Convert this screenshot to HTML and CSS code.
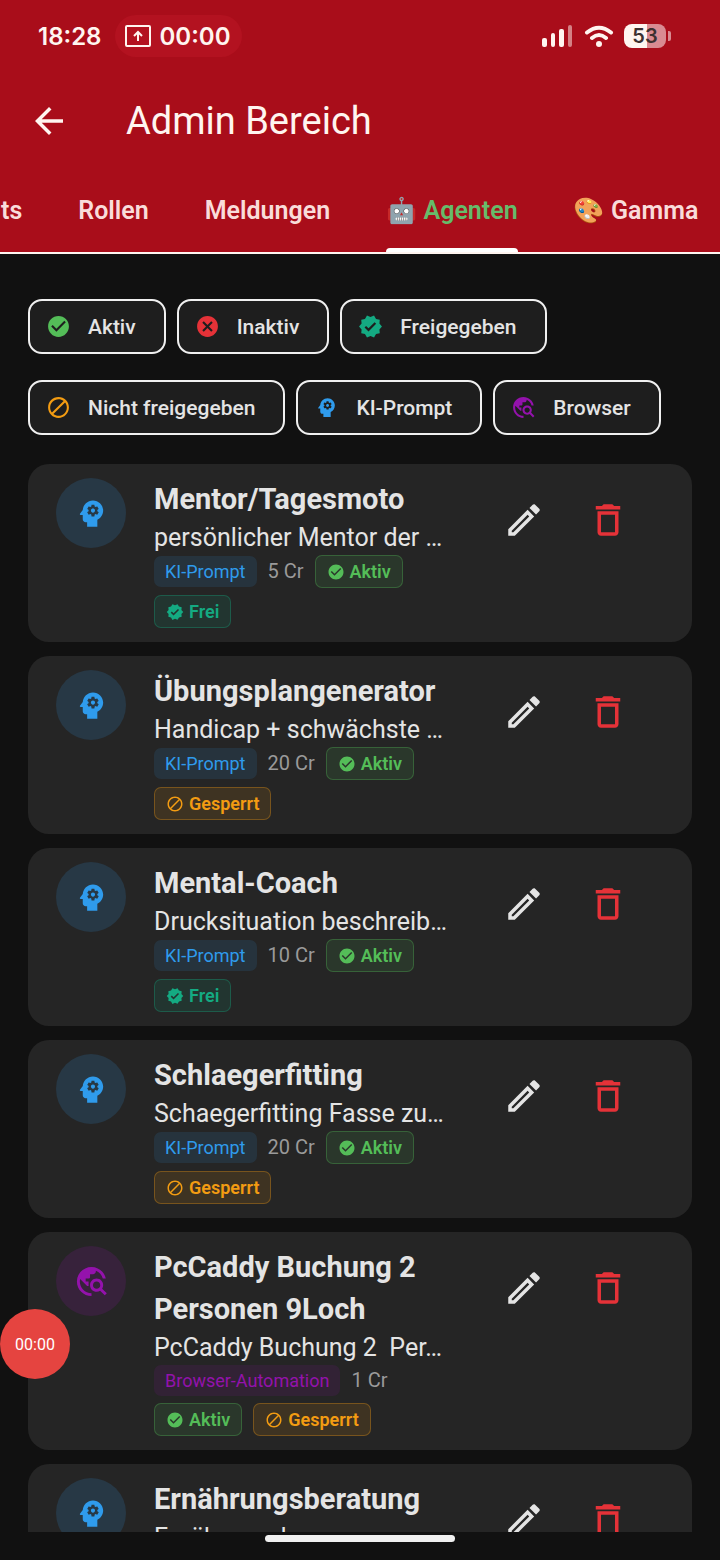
FILE: index.html
```html
<!DOCTYPE html>
<html lang="de">
<head>
<meta charset="utf-8">
<meta name="viewport" content="width=device-width, initial-scale=1">
<title>Admin Bereich</title>
<link rel="stylesheet" href="styles.css">
</head>
<body>
<svg class="sprite" aria-hidden="true">
  <symbol id="check" viewBox="0 0 24 24"><path d="M12 2C6.48 2 2 6.48 2 12s4.48 10 10 10 10-4.48 10-10S17.52 2 12 2zm-2 15l-5-5 1.41-1.41L10 14.17l7.59-7.59L19 8l-9 9z"/></symbol>
  <symbol id="cancel" viewBox="0 0 24 24"><path d="M12 2C6.47 2 2 6.47 2 12s4.47 10 10 10 10-4.47 10-10S17.53 2 12 2zm5 13.59L15.59 17 12 13.41 8.41 17 7 15.59 10.59 12 7 8.41 8.41 7 12 10.59 15.59 7 17 8.41 13.41 12 17 15.59z"/></symbol>
  <symbol id="verified" viewBox="0 0 24 24"><path d="M23 12l-2.44-2.79.34-3.69-3.61-.82-1.89-3.2L12 2.96 8.6 1.5 6.71 4.69 3.1 5.5l.34 3.7L1 12l2.44 2.79-.34 3.7 3.61.82L8.6 22.5l3.4-1.47 3.4 1.46 1.89-3.19 3.61-.82-.34-3.69L23 12zm-12.91 4.72l-3.8-3.81 1.48-1.48 2.32 2.33 5.85-5.87 1.48 1.48-7.33 7.35z"/></symbol>
  <symbol id="block" viewBox="0 0 24 24"><path d="M12 2C6.48 2 2 6.48 2 12s4.48 10 10 10 10-4.48 10-10S17.52 2 12 2zM4 12c0-4.42 3.58-8 8-8 1.85 0 3.55.63 4.9 1.69L5.69 16.9C4.63 15.55 4 13.85 4 12zm8 8c-1.85 0-3.55-.63-4.9-1.69L18.31 7.1C19.37 8.45 20 10.15 20 12c0 4.42-3.58 8-8 8z"/></symbol>
  <symbol id="mind" viewBox="0 0 24 24"><path d="M13 8.57c-.79 0-1.43.64-1.43 1.43s.64 1.43 1.43 1.43 1.43-.64 1.43-1.43-.64-1.43-1.43-1.43z"/><path d="M13 3C9.25 3 6.2 5.94 6.02 9.64L4.1 12.2c-.25.33-.01.8.4.8H6v3c0 1.1.9 2 2 2h1v3h7v-4.68c2.36-1.12 4-3.53 4-6.32 0-3.87-3.13-7-7-7zm3 7c0 .13-.01.26-.02.39l.83.66c.08.06.1.16.05.25l-.8 1.39c-.05.09-.16.12-.24.09l-.99-.4c-.21.16-.43.29-.67.39L14 13.83c-.01.1-.1.17-.2.17h-1.6c-.1 0-.18-.07-.2-.17l-.15-1.06c-.25-.1-.47-.23-.68-.39l-.99.4c-.09.03-.2 0-.25-.09l-.8-1.39c-.05-.08-.03-.19.05-.25l.84-.66c-.01-.13-.02-.26-.02-.39s.02-.27.04-.39l-.85-.66c-.08-.06-.1-.16-.05-.26l.8-1.38c.05-.09.15-.12.24-.09l1 .4c.2-.15.43-.29.67-.39L12 6.17c.02-.1.1-.17.2-.17h1.6c.1 0 .18.07.2.17l.15 1.06c.24.1.46.23.67.39l1-.4c.09-.03.2 0 .24.09l.8 1.38c.05.09.03.2-.05.26l-.85.66c.03.12.04.25.04.39z"/></symbol>
  <symbol id="globe" viewBox="0 0 24 24"><path d="M19.3 16.9c.4-.7.7-1.5.7-2.4 0-2.5-2-4.5-4.5-4.5S11 12 11 14.5s2 4.5 4.5 4.5c.9 0 1.7-.3 2.4-.7l3.2 3.2 1.4-1.4-3.2-3.2zm-3.8.1c-1.4 0-2.5-1.1-2.5-2.5s1.1-2.5 2.5-2.5 2.5 1.1 2.5 2.5-1.1 2.5-2.5 2.5zM12 20v2C6.48 22 2 17.52 2 12S6.48 2 12 2c4.84 0 8.87 3.44 9.8 8h-2.07c-.64-2.46-2.4-4.47-4.73-5.41V5c0 1.1-.9 2-2 2h-2v2c0 .55-.45 1-1 1H8v2h2v3H9l-4.79-4.79C4.08 10.79 4 11.38 4 12c0 4.41 3.59 8 8 8z"/></symbol>
  <symbol id="edit" viewBox="0 0 24 24"><path d="M14.06 9.02l.92.92L5.92 19H5v-.92l9.06-9.06M17.66 3c-.25 0-.51.1-.7.29l-1.83 1.83 3.75 3.75 1.83-1.83c.39-.39.39-1.02 0-1.41l-2.34-2.34c-.2-.2-.45-.29-.71-.29zm-3.6 3.19L3 17.25V21h3.75L17.81 9.94l-3.75-3.75z"/></symbol>
  <symbol id="trash" viewBox="0 0 24 24"><path d="M6 19c0 1.1.9 2 2 2h8c1.1 0 2-.9 2-2V7H6v12zM8 9h8v10H8V9zm7.5-5l-1-1h-5l-1 1H5v2h14V4z"/></symbol>
  <symbol id="back" viewBox="0 0 24 24"><path d="M20 11H7.83l5.59-5.59L12 4l-8 8 8 8 1.41-1.41L7.83 13H20v-2z"/></symbol>
</svg>

<div class="screen">
  <header class="top">
    <div class="status">
      <span class="clock">18:28</span>
      <span class="capture">
        <svg class="capture-icon" viewBox="0 0 26 22"><rect x="1" y="1" width="24" height="20" rx="1" fill="none" stroke="currentColor" stroke-width="2"/><path d="M13 16V8M9 11L13 7l4 4" fill="none" stroke="currentColor" stroke-width="2"/></svg>
        00:00
      </span>
      <span class="signals">
        <svg class="bars" viewBox="0 0 32 22"><rect x="0" y="13" width="5" height="9" rx="2"/><rect x="9" y="8" width="4" height="14" rx="2"/><rect x="17" y="4" width="5" height="18" rx="2"/><rect x="26" y="0" width="4" height="22" rx="2" opacity=".5"/></svg>
        <svg class="wifi" viewBox="0 0 30 22"><path d="M3 7.500Q15-2 27 7.500M8 13Q15 7 22 13" fill="none" stroke="currentColor" stroke-width="4" stroke-linecap="round"/><circle cx="15" cy="19" r="3"/></svg>
        <span class="battery"><span class="battery-body">53</span><span class="battery-tip"></span></span>
      </span>
    </div>
    <div class="appbar">
      <button class="back" type="button" aria-label="Zurück"><svg class="icon-large"><use href="#back"/></svg></button>
      <h1 class="title">Admin Bereich</h1>
    </div>
    <nav class="tabs">
      <a class="tab" href="#ts">ts</a>
      <a class="tab" href="#rollen">Rollen</a>
      <a class="tab" href="#meldungen">Meldungen</a>
      <a class="tab active" href="#agenten" aria-current="page">🤖 Agenten</a>
      <a class="tab" href="#gamma">🎨 Gamma</a>
    </nav>
  </header>

  <main class="content">
    <div class="filters">
      <button class="chip" type="button"><svg class="icon-chip green"><use href="#check"/></svg>Aktiv</button>
      <button class="chip" type="button"><svg class="icon-chip red"><use href="#cancel"/></svg>Inaktiv</button>
      <button class="chip" type="button"><svg class="icon-chip teal"><use href="#verified"/></svg>Freigegeben</button>
      <button class="chip" type="button"><svg class="icon-chip orange"><use href="#block"/></svg>Nicht freigegeben</button>
      <button class="chip" type="button"><svg class="icon-chip blue"><use href="#mind"/></svg>KI-Prompt</button>
      <button class="chip" type="button"><svg class="icon-chip purple"><use href="#globe"/></svg>Browser</button>
    </div>

    <div class="agents">
      <article class="card">
        <span class="avatar blue"><svg class="icon-avatar"><use href="#mind"/></svg></span>
        <div class="info">
          <h2 class="name">Mentor/Tagesmoto</h2>
          <p class="desc">persönlicher Mentor der …</p>
          <div class="badges">
            <span class="kind blue">KI-Prompt</span><span class="credits">5 Cr</span>
            <span class="badge green"><svg class="icon-badge"><use href="#check"/></svg>Aktiv</span>
            <span class="badge teal"><svg class="icon-badge"><use href="#verified"/></svg>Frei</span>
          </div>
        </div>
        <div class="actions">
          <button class="action" type="button" aria-label="Bearbeiten"><svg class="icon-large"><use href="#edit"/></svg></button>
          <button class="action red" type="button" aria-label="Löschen"><svg class="icon-large"><use href="#trash"/></svg></button>
        </div>
      </article>

      <article class="card">
        <span class="avatar blue"><svg class="icon-avatar"><use href="#mind"/></svg></span>
        <div class="info">
          <h2 class="name">Übungsplangenerator</h2>
          <p class="desc">Handicap + schwächste …</p>
          <div class="badges">
            <span class="kind blue">KI-Prompt</span><span class="credits">20 Cr</span>
            <span class="badge green"><svg class="icon-badge"><use href="#check"/></svg>Aktiv</span>
            <span class="badge orange"><svg class="icon-badge"><use href="#block"/></svg>Gesperrt</span>
          </div>
        </div>
        <div class="actions">
          <button class="action" type="button" aria-label="Bearbeiten"><svg class="icon-large"><use href="#edit"/></svg></button>
          <button class="action red" type="button" aria-label="Löschen"><svg class="icon-large"><use href="#trash"/></svg></button>
        </div>
      </article>

      <article class="card">
        <span class="avatar blue"><svg class="icon-avatar"><use href="#mind"/></svg></span>
        <div class="info">
          <h2 class="name">Mental-Coach</h2>
          <p class="desc">Drucksituation beschreib…</p>
          <div class="badges">
            <span class="kind blue">KI-Prompt</span><span class="credits">10 Cr</span>
            <span class="badge green"><svg class="icon-badge"><use href="#check"/></svg>Aktiv</span>
            <span class="badge teal"><svg class="icon-badge"><use href="#verified"/></svg>Frei</span>
          </div>
        </div>
        <div class="actions">
          <button class="action" type="button" aria-label="Bearbeiten"><svg class="icon-large"><use href="#edit"/></svg></button>
          <button class="action red" type="button" aria-label="Löschen"><svg class="icon-large"><use href="#trash"/></svg></button>
        </div>
      </article>

      <article class="card">
        <span class="avatar blue"><svg class="icon-avatar"><use href="#mind"/></svg></span>
        <div class="info">
          <h2 class="name">Schlaegerfitting</h2>
          <p class="desc">Schaegerfitting Fasse zu…</p>
          <div class="badges">
            <span class="kind blue">KI-Prompt</span><span class="credits">20 Cr</span>
            <span class="badge green"><svg class="icon-badge"><use href="#check"/></svg>Aktiv</span>
            <span class="badge orange"><svg class="icon-badge"><use href="#block"/></svg>Gesperrt</span>
          </div>
        </div>
        <div class="actions">
          <button class="action" type="button" aria-label="Bearbeiten"><svg class="icon-large"><use href="#edit"/></svg></button>
          <button class="action red" type="button" aria-label="Löschen"><svg class="icon-large"><use href="#trash"/></svg></button>
        </div>
      </article>

      <article class="card">
        <span class="avatar purple"><svg class="icon-avatar"><use href="#globe"/></svg></span>
        <div class="info">
          <h2 class="name">PcCaddy Buchung 2 Personen 9Loch</h2>
          <p class="desc">PcCaddy Buchung 2&nbsp; Per…</p>
          <div class="badges">
            <span class="kind purple">Browser-Automation</span><span class="credits">1 Cr</span>
            <span class="badge green"><svg class="icon-badge"><use href="#check"/></svg>Aktiv</span>
            <span class="badge orange"><svg class="icon-badge"><use href="#block"/></svg>Gesperrt</span>
          </div>
        </div>
        <div class="actions">
          <button class="action" type="button" aria-label="Bearbeiten"><svg class="icon-large"><use href="#edit"/></svg></button>
          <button class="action red" type="button" aria-label="Löschen"><svg class="icon-large"><use href="#trash"/></svg></button>
        </div>
      </article>

      <article class="card">
        <span class="avatar blue"><svg class="icon-avatar"><use href="#mind"/></svg></span>
        <div class="info">
          <h2 class="name">Ernährungsberatung</h2>
          <p class="desc">Ernährungsb…</p>
        </div>
        <div class="actions">
          <button class="action" type="button" aria-label="Bearbeiten"><svg class="icon-large"><use href="#edit"/></svg></button>
          <button class="action red" type="button" aria-label="Löschen"><svg class="icon-large"><use href="#trash"/></svg></button>
        </div>
      </article>
    </div>
  </main>

  <footer class="gesture"><span class="handle"></span></footer>
  <button class="recorder" type="button">00:00</button>
</div>
</body>
</html>
```
FILE: styles.css
```css
* { box-sizing: border-box; }
body { margin: 0; background: #111; color: #e4e4e4; font-family: Roboto, "Noto Sans", "Noto Color Emoji", sans-serif; }
h1, h2, p { margin: 0; }
button { border: 0; margin: 0; padding: 0; background: none; color: inherit; font: inherit; cursor: pointer; }
svg { display: block; flex: none; fill: currentColor; }
.sprite { position: absolute; width: 0; height: 0; }

.screen { position: relative; display: flex; flex-direction: column; height: 100vh; overflow: hidden; }

.top { flex: none; background: #a90d1a; color: #fff5f0; }
.status { display: flex; align-items: center; height: 72px; padding: 0 49px 0 38px; font: 600 24px Inter, sans-serif; }
.capture { display: flex; align-items: center; gap: 8px; height: 42px; margin-left: 14px; padding: 0 12px 0 10px; border-radius: 21px; background: #b31220; }
.capture-icon { width: 26px; height: 22px; }
.signals { display: flex; align-items: center; gap: 10px; margin-left: auto; }
.bars { width: 32px; height: 22px; }
.wifi { width: 30px; height: 22px; }
.battery { display: flex; align-items: center; gap: 2px; }
.battery-body { width: 42px; height: 24px; border-radius: 8px; background: linear-gradient(90deg, #fff5f0 55%, #d98b92 55%); color: #3c3030; font-size: 20px; line-height: 24px; text-align: center; }
.battery-tip { width: 3px; height: 10px; border-radius: 0 2px 2px 0; background: #d98b92; }

.appbar { display: flex; align-items: center; gap: 28px; height: 98px; padding: 0 28px; }
.back { display: flex; align-items: center; width: 70px; height: 84px; }
.title { font-size: 38px; font-weight: 400; line-height: 48px; }

.tabs { display: flex; gap: 56px; height: 84px; padding-left: 1px; border-bottom: 2px solid #fff5f0; overflow: hidden; }
.tab { position: relative; flex: none; color: #f9dcda; font-size: 25px; font-weight: 600; line-height: 82px; text-decoration: none; white-space: nowrap; }
.tab.active { color: #66bb6a; }
.tab.active::after { content: ""; position: absolute; left: 0; right: 0; bottom: 0; height: 4px; border-radius: 4px 4px 0 0; background: #fff; }

.content { flex: 1; min-height: 0; padding: 45px 28px 0; overflow: hidden; }
.filters { display: flex; flex-wrap: wrap; gap: 26px 11px; }
.chip { display: flex; align-items: center; gap: 17px; height: 55px; padding: 0 28px 0 16px; border: 2px solid #f0f0f0; border-radius: 14px; background: #1e1e1e; font-size: 21px; font-weight: 500; }
.icon-chip { width: 25px; height: 25px; }

.agents { display: flex; flex-direction: column; gap: 14px; padding-top: 29px; }
.card { display: flex; flex: none; align-items: flex-start; gap: 28px; padding: 14px 42px 14px 28px; border-radius: 21px; background: #252525; }
.avatar { display: flex; flex: none; align-items: center; justify-content: center; width: 70px; height: 70px; border-radius: 50%; background: color-mix(in srgb, currentColor 16%, transparent); }
.icon-avatar { width: 35px; height: 35px; }
.info { flex: 1; min-width: 0; }
.name { font-size: 29px; font-weight: 700; line-height: 42px; }
.desc { font-size: 25px; line-height: 35px; overflow: hidden; white-space: nowrap; }
.badges { display: flex; flex-wrap: wrap; align-items: center; gap: 7px 11px; }
.kind { padding: 0 11px; border-radius: 7px; background: color-mix(in srgb, currentColor 12%, transparent); font-size: 18px; line-height: 31px; }
.credits { color: #9a9a9a; font-size: 20px; line-height: 31px; }
.badge { display: flex; align-items: center; gap: 5px; padding: 0 11px; border: 1px solid color-mix(in srgb, currentColor 32%, transparent); border-radius: 7px; background: color-mix(in srgb, currentColor 12%, transparent); font-size: 18px; font-weight: 600; line-height: 31px; }
.icon-badge { width: 18px; height: 18px; }
.actions { display: flex; flex: none; }
.action { display: flex; align-items: center; justify-content: center; width: 84px; height: 84px; }
.icon-large { width: 42px; height: 42px; }

.green { color: #54bd58; }
.red { color: #e53238; }
.teal { color: #14aa82; }
.orange { color: #f39c12; }
.blue { color: #2f9bec; }
.purple { color: #9412ac; }

.gesture { display: flex; flex: none; justify-content: center; height: 28px; padding-top: 3px; }
.handle { width: 190px; height: 7px; border-radius: 4px; background: #f0f0f0; }
.recorder { position: absolute; left: 0; bottom: 181px; width: 70px; height: 70px; border-radius: 50%; background: #e54440; color: #fff; font-size: 16px; }
```
